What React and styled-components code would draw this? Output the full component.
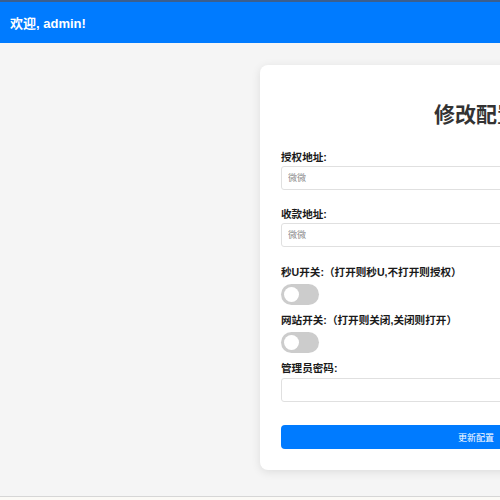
import React, { useState } from 'react';
import styled, { createGlobalStyle } from 'styled-components';

const GlobalStyle = createGlobalStyle`
  html, body {
    margin: 0;
    padding: 0;
    overflow: hidden;
    background: #fbfaf6;
  }
  body {
    font-family: "Liberation Sans", "Noto Sans CJK SC", sans-serif;
  }
`;

const Page = styled.div`
  width: 952px;
  min-height: 496px;
  background: #f5f5f5;
  border-bottom: 1px solid #d6d6d6;
`;

const Header = styled.header`
  height: 41px;
  border-top: 2px solid #3b5f8f;
  background: #007bff;
  color: #fff;
  display: flex;
  align-items: center;
  padding-left: 10px;
  font-size: 13px;
  font-weight: bold;
`;

const Main = styled.main`
  display: flex;
  justify-content: center;
  padding-top: 22px;
`;

const Card = styled.form`
  width: 432px;
  box-sizing: border-box;
  background: #fff;
  border-radius: 8px;
  box-shadow: 0 2px 10px rgba(0, 0, 0, 0.1);
  padding: 20px 21px 21px;
`;

const Title = styled.h2`
  margin: 17px 0 23px;
  text-align: center;
  font-size: 21px;
  line-height: 25px;
  font-weight: bold;
  color: #333;
`;

const Label = styled.label`
  display: block;
  font-size: 10.6px;
  line-height: 14px;
  font-weight: bold;
  color: #1a1a1a;
  margin-bottom: ${(p) => p.gap || 2}px;
`;

const Field = styled.div`
  margin-bottom: ${(p) => p.gap || 0}px;
`;

const Input = styled.input`
  display: block;
  width: 100%;
  height: 24px;
  box-sizing: border-box;
  border: 1px solid #e0e0e0;
  border-radius: 3px;
  padding: 0 6px;
  font-size: 9px;
  font-family: inherit;
  outline: none;
  &::placeholder {
    color: #8a8a8a;
  }
`;

const Toggle = styled.button`
  position: relative;
  display: block;
  width: 38px;
  height: 21px;
  border: none;
  padding: 0;
  border-radius: 11px;
  background: ${(p) => (p.on ? '#007bff' : '#ccc')};
  cursor: pointer;
  &::before {
    content: '';
    position: absolute;
    top: 3px;
    left: ${(p) => (p.on ? '20px' : '3px')};
    width: 15px;
    height: 15px;
    border-radius: 50%;
    background: #fff;
  }
`;

const SubmitButton = styled.button`
  display: block;
  width: 100%;
  height: 24px;
  border: none;
  border-radius: 4px;
  background: #007bff;
  color: #fff;
  font-size: 9px;
  font-family: inherit;
`;

export default function App() {
  const [miaoU, setMiaoU] = useState(false);
  const [site, setSite] = useState(false);

  return (
    <>
      <GlobalStyle />
      <Page>
        <Header>欢迎, admin!</Header>
        <Main>
          <Card onSubmit={(e) => e.preventDefault()}>
            <Title>修改配置</Title>
            <Field gap={17}>
              <Label>授权地址:</Label>
              <Input placeholder="微微" />
            </Field>
            <Field gap={18}>
              <Label>收款地址:</Label>
              <Input placeholder="微微" />
            </Field>
            <Field gap={8}>
              <Label gap={5}>秒U开关:（打开则秒U,不打开则授权）</Label>
              <Toggle type="button" on={miaoU ? 1 : 0} onClick={() => setMiaoU(!miaoU)} />
            </Field>
            <Field gap={8}>
              <Label gap={5}>网站开关:（打开则关闭,关闭则打开）</Label>
              <Toggle type="button" on={site ? 1 : 0} onClick={() => setSite(!site)} />
            </Field>
            <Field gap={23}>
              <Label gap={3}>管理员密码:</Label>
              <Input type="password" />
            </Field>
            <SubmitButton type="submit">更新配置</SubmitButton>
          </Card>
        </Main>
      </Page>
    </>
  );
}
